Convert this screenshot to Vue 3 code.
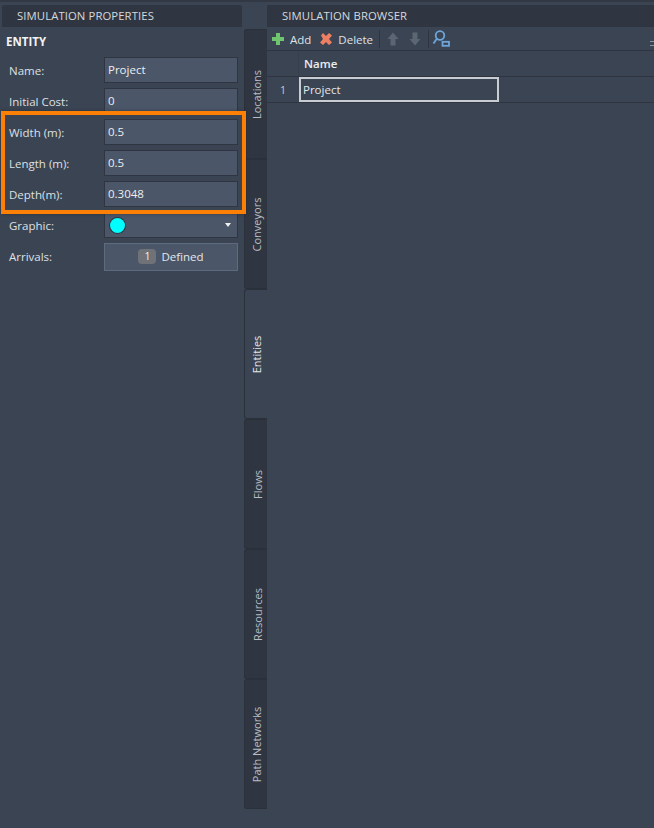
<script setup>
const fields = [
  { label: 'Name:', value: 'Project' },
  { label: 'Initial Cost:', value: '0' },
  { label: 'Width (m):', value: '0.5' },
  { label: 'Length (m):', value: '0.5' },
  { label: 'Depth(m):', value: '0.3048' },
]
const tabs = ['Locations', 'Conveyors', 'Entities', 'Flows', 'Resources', 'Path Networks']
</script>

<template>
  <div class="app">
    <section class="left">
      <header class="panel-head left-head">SIMULATION PROPERTIES</header>
      <h2 class="entity">ENTITY</h2>
      <div class="form">
        <div v-for="f in fields" :key="f.label" class="row">
          <span class="label">{{ f.label }}</span>
          <div class="input">{{ f.value }}</div>
        </div>
        <div class="row">
          <span class="label">Graphic:</span>
          <div class="input graphic">
            <span class="dot"></span>
            <span class="caret"></span>
          </div>
        </div>
        <div class="row">
          <span class="label">Arrivals:</span>
          <div class="button"><span class="badge">1</span>Defined</div>
        </div>
      </div>
      <div class="highlight"></div>
    </section>

    <nav class="tabs">
      <div v-for="t in tabs" :key="t" class="tab" :class="{ active: t === 'Entities' }">
        <span class="tab-text">{{ t }}</span>
      </div>
    </nav>

    <section class="right">
      <header class="panel-head right-head">SIMULATION BROWSER</header>
      <div class="toolbar">
        <svg class="ico" width="14" height="14" viewBox="0 0 14 14"><path d="M5 1h4v4h4v4H9v4H5V9H1V5h4z" fill="#6fc46f"/></svg>
        <span class="tool-text add">Add</span>
        <svg class="ico del-ico" width="14" height="14" viewBox="0 0 14 14"><path d="M2 3.500l2-2.500 3 3 3-3 3 2.500-3 3.500 3 3.500-3 2.500-3-3-3 3-3-2.500 3-3.500z" fill="#ee7f63"/></svg>
        <span class="tool-text del">Delete</span>
        <span class="sep"></span>
        <svg class="ico" width="12" height="14" viewBox="0 0 12 14"><path d="M6 0.500l5.500 6.500H8.500v6.500h-5V7H0.500z" fill="#5c6672"/></svg>
        <svg class="ico down" width="12" height="14" viewBox="0 0 12 14"><path d="M6 13.500L0.500 7h3V0.500h5V7h3z" fill="#5c6672"/></svg>
        <span class="sep sep2"></span>
        <svg class="ico" width="18" height="18" viewBox="0 0 18 18" fill="none" stroke="#6ea6dc" stroke-width="1.800"><circle cx="8" cy="5.500" r="4.300"/><path d="M4.800 8.800L1.500 13.500"/><rect x="10.500" y="11.800" width="6.500" height="4"/></svg>
        <span class="filter"></span>
      </div>
      <div class="grid-row grid-head">
        <div class="num"></div>
        <div class="name-head">Name</div>
      </div>
      <div class="grid-row grid-body">
        <div class="num">1</div>
        <div class="cell">Project</div>
      </div>
    </section>
  </div>
</template>

<style scoped>
.app {
  position: relative;
  width: 654px;
  height: 828px;
  display: flex;
  overflow: hidden;
  background: #3b4453;
  border-top: 2px solid #323945;
  box-sizing: border-box;
  font-family: "Open Sans", "Noto Sans", sans-serif;
  font-size: 11.500px;
  color: #e4e7ea;
}
.left {
  width: 244px;
  flex: none;
  padding-top: 3px;
  box-sizing: border-box;
  position: relative;
}
.panel-head {
  height: 22px;
  line-height: 22px;
  background: #303641;
  font-size: 11.300px;
  color: #d5d9dd;
  box-sizing: border-box;
  letter-spacing: 0.1px;
}
.left-head {
  margin-left: 2px;
  margin-right: 2px;
  padding-left: 15px;
  border-radius: 2px 2px 0 0;
}
.entity {
  margin: 6px 0 0 6px;
  font-size: 11.500px;
  font-weight: 700;
  line-height: 18px;
  height: 18px;
  color: #f2f3f5;
}
.form {
  margin-top: 6px;
  display: flex;
  flex-direction: column;
  gap: 5px;
}
.row {
  display: flex;
  align-items: center;
  height: 26px;
}
.label {
  width: 104px;
  padding-left: 9px;
  box-sizing: border-box;
  color: #dde0e4;
}
.input {
  width: 134px;
  height: 26px;
  line-height: 24px;
  box-sizing: border-box;
  background: #4b5669;
  border: 1px solid #303641;
  padding-left: 3px;
  color: #eceef0;
}
.graphic {
  display: flex;
  align-items: center;
  justify-content: space-between;
  padding: 0 6px 0 5px;
}
.dot {
  width: 15px;
  height: 15px;
  border-radius: 50%;
  background: #00ffff;
  box-shadow: 0 0 0 1px #2c3440;
}
.caret {
  width: 0;
  height: 0;
  border-left: 3px solid transparent;
  border-right: 3px solid transparent;
  border-top: 4px solid #f2f2f2;
}
.button {
  width: 134px;
  height: 28px;
  margin-top: 1px;
  box-sizing: border-box;
  background: #4b5669;
  border: 1px solid #5e6a7d;
  display: flex;
  align-items: center;
  justify-content: center;
  gap: 5px;
  color: #e4e7ea;
}
.badge {
  width: 18px;
  height: 15px;
  border-radius: 4px;
  background: #6f7276;
  font-size: 10.500px;
  line-height: 15px;
  text-align: center;
  color: #f2f2f2;
}
.highlight {
  position: absolute;
  left: 1px;
  top: 109px;
  width: 245px;
  height: 103px;
  box-sizing: border-box;
  border: 4px solid #fb8005;
  box-shadow: 0 0 3px rgba(30, 35, 45, 0.5);
}
.tabs {
  width: 23px;
  flex: none;
  padding-top: 27px;
  display: flex;
  flex-direction: column;
}
.tab {
  height: 130px;
  flex: none;
  box-sizing: border-box;
  background: #303641;
  border: 1px solid #2b313b;
  border-right: none;
  border-radius: 3px 0 0 3px;
  display: flex;
  align-items: center;
  justify-content: center;
}
.tab.active {
  background: #3b4453;
}
.tab-text {
  transform: rotate(-90deg);
  white-space: nowrap;
  font-size: 11px;
  padding-top: 2px;
  color: #b8bdc4;
}
.tab.active .tab-text {
  color: #e4e7ea;
}
.right {
  flex: 1;
  min-width: 0;
  padding-top: 3px;
}
.right-head {
  padding-left: 15px;
}
.toolbar {
  height: 24px;
  display: flex;
  align-items: center;
  padding-left: 4px;
  border-bottom: 1px solid #2f3540;
  position: relative;
  box-sizing: border-box;
}
.tool-text {
  color: #dfe2e6;
  margin-left: 5px;
  padding-top: 2px;
}
.del {
  margin-left: 5px;
}
.del-ico {
  margin-left: 8px;
}
.sep {
  width: 1px;
  height: 18px;
  background: #2f3540;
  margin: 0 7px 0 6px;
}
.sep2 {
  margin: 0 3px 0 7px;
}
.down {
  margin-left: 10px;
}
.filter {
  position: absolute;
  right: -3px;
  top: 14px;
  width: 7px;
  height: 3px;
  border-top: 1px solid #8a929d;
  border-bottom: 1px solid #8a929d;
}
.grid-row {
  display: flex;
  height: 26px;
  box-sizing: border-box;
  border-bottom: 1px solid #2f3540;
}
.num {
  width: 31px;
  flex: none;
  text-align: center;
  line-height: 26px;
  font-size: 10.500px;
  color: #c6cad0;
  padding-left: 1px;
  box-sizing: border-box;
}
.name-head {
  font-weight: 600;
  padding-left: 5px;
  line-height: 25px;
  color: #eceef0;
  border-left: 1px solid #36404c;
}
.cell {
  width: 200px;
  height: 25px;
  line-height: 22px;
  box-sizing: border-box;
  border: 2px solid #c9cdd1;
  padding-left: 2px;
  margin-left: 1px;
}
</style>
